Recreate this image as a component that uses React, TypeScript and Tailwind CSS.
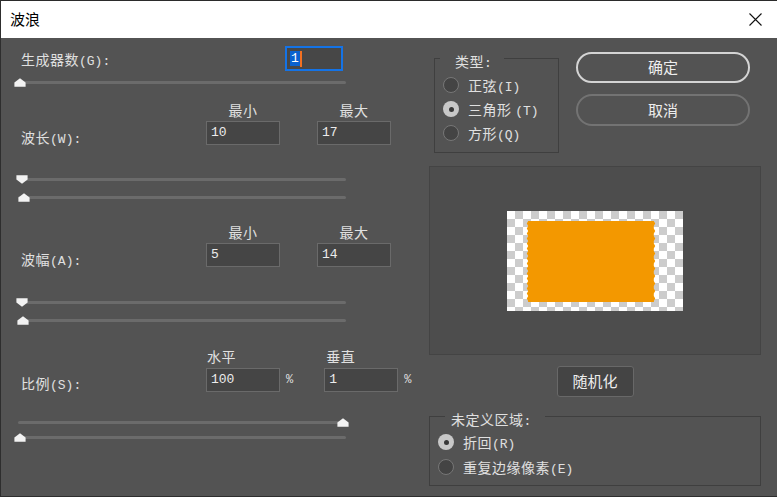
import React from 'react';

const CJK = "font-['Noto_Sans_CJK_SC','Noto_Sans_CJK_JP',sans-serif]";
const MONO = "font-['Liberation_Mono','DejaVu_Sans_Mono',monospace]";
const LABEL = `${CJK} text-[14px] leading-[16px] tracking-[0.5px] text-[#e0e0e0]`;

function Key({ children }: { children: React.ReactNode }) {
    return <span className={`${MONO} text-[13px] leading-none tracking-normal`}>{children}</span>;
}

function Thumb({ dir }: { dir: 'up' | 'down' }) {
    return (
        <svg width="12" height="9" viewBox="0 0 12 9">
            {dir === 'up' ? (
                <path d="M6 0.3 L11.6 4.6 V8.7 H0.4 V4.6 Z" fill="#f2f2f2" />
            ) : (
                <path d="M0.4 0.3 H11.6 V4.4 L6 8.7 L0.4 4.4 Z" fill="#f2f2f2" />
            )}
        </svg>
    );
}

function Slider({ at, dir = 'up' }: { at: number; dir?: 'up' | 'down' }) {
    return (
        <div className="relative ml-[17px] flex h-[10px] w-[328px] items-center">
            <div className="h-[3px] w-full rounded-full bg-[#6b6b6b]" />
            <div className="absolute top-[1px] flex" style={{ left: at }}>
                <Thumb dir={dir} />
            </div>
        </div>
    );
}

function Field({ value }: { value: string }) {
    return (
        <div className={`flex h-[24px] w-[74px] items-center border border-[#6a6a6a] bg-[#454545] pl-[4px] ${MONO} text-[13px] text-[#ececec]`}>
            {value}
        </div>
    );
}

function Radio({ checked, children }: { checked?: boolean; children: React.ReactNode }) {
    return (
        <div className="flex h-[16px] items-center">
            {checked ? (
                <span className="flex h-[16px] w-[16px] items-center justify-center rounded-full bg-[#c8c8c8]">
                    <span className="h-[5px] w-[5px] rounded-full bg-[#383838]" />
                </span>
            ) : (
                <span className="h-[16px] w-[16px] rounded-full border-[1.5px] border-[#777777] bg-[#444444]" />
            )}
            <span className={`ml-[9px] ${LABEL}`}>{children}</span>
        </div>
    );
}

// min / max pair with the label sitting a bit lower than the fields
function RangeRow({ label, k, min, max }: { label: string; k: string; min: string; max: string }) {
    return (
        <div className="flex h-[43px]">
            <div className={`h-[43px] w-[205px] pl-[20px] pt-[27px] ${LABEL}`}>
                {label}<Key>({k}):</Key>
            </div>
            <div className="flex w-[74px] flex-col items-center">
                <span className={`h-[16px] ${LABEL}`}>最小</span>
                <div className="mt-[3px]"><Field value={min} /></div>
            </div>
            <div className="ml-[37px] flex w-[74px] flex-col items-center">
                <span className={`h-[16px] ${LABEL}`}>最大</span>
                <div className="mt-[3px]"><Field value={max} /></div>
            </div>
        </div>
    );
}

const orangePoints = (() => {
    const left: string[] = [];
    const right: string[] = [];
    let i = 0;
    for (let y = 10; y <= 91; y += 2.5) {
        left.push(`${i % 2 ? 19.8 : 21.2},${y}`);
        right.push(`${i % 3 === 1 ? 148.2 : 146.8},${y}`);
        i++;
    }
    return [...left, '21,91', '147,91', ...right.reverse(), '147,10'].join(' ');
})();

function Preview() {
    return (
        <svg width="176" height="100" viewBox="0 0 176 100">
            <defs>
                <pattern id="chk" width="16" height="16" patternUnits="userSpaceOnUse">
                    <rect width="16" height="16" fill="#ffffff" />
                    <rect x="8" width="8" height="8" fill="#cccccc" />
                    <rect y="8" width="8" height="8" fill="#cccccc" />
                </pattern>
            </defs>
            <rect width="176" height="100" fill="url(#chk)" />
            <polygon points={orangePoints} fill="#f39800" />
        </svg>
    );
}

export default function App() {
    return (
        <div className="flex h-[497px] w-[777px] flex-col overflow-hidden border-b border-l border-[#2e2e2e] bg-[#535353]">
            {/* title bar */}
            <div className="flex h-[38px] shrink-0 items-center justify-between border-t border-[#2b2b2b] bg-white pl-[9px] pr-[15px]">
                <span className={`${CJK} text-[15px] text-black`}>波浪</span>
                <svg width="13" height="13" viewBox="0 0 13 13">
                    <path d="M0.5 0.5 L12.5 12.5 M12.5 0.5 L0.5 12.5" stroke="#111" strokeWidth="1.1" />
                </svg>
            </div>

            <div className="flex flex-1">
                {/* left column */}
                <div className="flex w-[428px] flex-col">
                    <div className="mt-[8px] flex h-[25px] items-center">
                        <div className={`h-[16px] w-[284px] pl-[20px] ${LABEL}`}>
                            生成器数<Key>(G):</Key>
                        </div>
                        <div className="flex h-[25px] w-[58px] items-center border-2 border-[#1473e6] bg-[#474747] pl-[3px]">
                            <span className={`flex h-[15px] items-center bg-[#0a62cf] px-[1px] ${MONO} text-[13px] text-white`}>1</span>
                            <span className="h-[16px] w-[2px] bg-[#f37021]" />
                        </div>
                    </div>
                    <div className="mt-[6px]"><Slider at={-4} /></div>

                    <div className="mt-[15px]"><RangeRow label="波长" k="W" min="10" max="17" /></div>
                    <div className="mt-[29px]"><Slider at={-2} dir="down" /></div>
                    <div className="mt-[8px]"><Slider at={0} /></div>

                    <div className="mt-[22px]"><RangeRow label="波幅" k="A" min="5" max="14" /></div>
                    <div className="mt-[30px]"><Slider at={-2} dir="down" /></div>
                    <div className="mt-[8px]"><Slider at={-1} /></div>

                    <div className="mt-[23px] flex h-[44px]">
                        <div className={`h-[44px] w-[205px] pl-[20px] pt-[27px] ${LABEL}`}>
                            比例<Key>(S):</Key>
                        </div>
                        <div className="flex flex-col">
                            <span className={`h-[16px] pl-[1px] ${LABEL}`}>水平</span>
                            <div className="mt-[4px] flex items-center">
                                <Field value="100" />
                                <span className={`ml-[6px] ${MONO} text-[12px] leading-none text-[#dedede]`}>%</span>
                            </div>
                        </div>
                        <div className="ml-[31px] flex flex-col">
                            <span className={`h-[16px] pl-[2px] ${LABEL}`}>垂直</span>
                            <div className="mt-[4px] flex items-center">
                                <Field value="1" />
                                <span className={`ml-[6px] ${MONO} text-[12px] leading-none text-[#dedede]`}>%</span>
                            </div>
                        </div>
                    </div>
                    <div className="mt-[25px]"><Slider at={319} /></div>
                    <div className="mt-[5px]"><Slider at={-4} /></div>
                </div>

                {/* right column */}
                <div className="flex w-[332px] flex-col">
                    <div className="flex items-start">
                        <div className="relative ml-[5px] mt-[20px] h-[95px] w-[125px] border border-[#3f3f3f]">
                            <span className={`absolute -top-[6px] left-[5px] bg-[#535353] pl-[15px] pr-[12px] ${LABEL}`}>
                                类型<Key>:</Key>
                            </span>
                            <div className="flex flex-col gap-[8px] pl-[8px] pt-[18px]">
                                <Radio>正弦<Key>(I)</Key></Radio>
                                <Radio checked>三角形 <Key>(T)</Key></Radio>
                                <Radio>方形<Key>(Q)</Key></Radio>
                            </div>
                        </div>
                        <div className="ml-[17px] mt-[14px] flex flex-col">
                            <button className={`h-[31px] w-[174px] rounded-full border-2 border-[#d4d4d4] ${CJK} text-[15px] text-[#eeeeee]`}>
                                确定
                            </button>
                            <button className={`mt-[11px] h-[32px] w-[174px] rounded-full border-2 border-[#737373] ${CJK} text-[15px] text-[#eeeeee]`}>
                                取消
                            </button>
                        </div>
                    </div>

                    <div className="mt-[13px] flex h-[189px] w-[332px] items-center justify-center border border-[#444444] bg-[#4d4d4d]">
                        <Preview />
                    </div>

                    <div className="mt-[11px] flex justify-center">
                        <button className={`h-[31px] w-[77px] rounded-[3px] border border-[#686868] bg-[#444444] ${CJK} text-[15px] text-[#eeeeee]`}>
                            随机化
                        </button>
                    </div>

                    <div className="relative mt-[19px] h-[70px] w-[332px] border border-[#3f3f3f]">
                        <span className={`absolute -top-[6px] left-[15px] bg-[#535353] pl-[6px] pr-[14px] ${LABEL}`}>
                            未定义区域<Key>:</Key>
                        </span>
                        <div className="flex flex-col gap-[9px] pl-[8px] pt-[17px]">
                            <Radio checked>折回<Key>(R)</Key></Radio>
                            <Radio>重复边缘像素<Key>(E)</Key></Radio>
                        </div>
                    </div>
                </div>
            </div>
        </div>
    );
}
